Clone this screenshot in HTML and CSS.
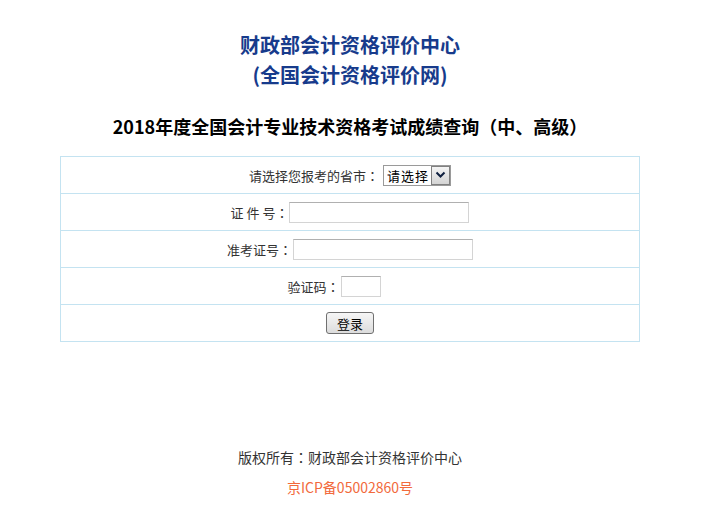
FILE: index.html
```html
<!DOCTYPE html>
<html lang="zh-CN">
<head>
  <meta charset="UTF-8" />
  <title>2018年度全国会计专业技术资格考试成绩查询</title>
  <link rel="stylesheet" href="styles.css">
</head>
<body>

  <div class="page">
    <div class="title">
      <div>财政部会计资格评价中心</div>
      <div>(全国会计资格评价网)</div>
    </div>

    <h2 class="subtitle">2018年度全国会计专业技术资格考试成绩查询（中、高级）</h2>

    <table class="query">
      <tr>
        <td>
          <span class="label">请选择您报考的省市<span class="colon" lang="zh-Hant">：</span></span>
          <span class="select">
            <span class="select-text">请选择</span>
            <span class="select-btn">
              <svg width="11" height="8" viewBox="0 0 11 8"><path d="M1.5 1.5 L5.5 5.5 L9.5 1.5" fill="none" stroke="#102040" stroke-width="2"/></svg>
            </span>
          </span>
        </td>
      </tr>
      <tr>
        <td><span class="label">证 件 号<span class="colon" lang="zh-Hant">：</span></span><input type="text" class="long"></td>
      </tr>
      <tr>
        <td><span class="label">准考证号<span class="colon" lang="zh-Hant">：</span></span><input type="text" class="long"></td>
      </tr>
      <tr>
        <td><span class="label">验证码<span class="colon" lang="zh-Hant">：</span></span><input type="text" class="short"><span class="code-img"></span></td>
      </tr>
      <tr>
        <td><button class="login">登录</button></td>
      </tr>
    </table>

    <div class="footer">
      <p>版权所有<span class="colon" lang="zh-Hant">：</span>财政部会计资格评价中心</p>
      <p class="icp">京ICP备05002860号</p>
    </div>
  </div>

</body>
</html>
```

FILE: styles.css
```css
body {
  margin: 0;
  font-family: "Noto Sans CJK SC", "Liberation Sans", sans-serif;
  font-size: 13px;
  color: #333;
  background: #fff;
}

.page {
  width: 700px;
}

.colon {
  font-family: "Noto Sans CJK TC", "Noto Sans CJK JP", sans-serif;
}

.title {
  margin-top: 30px;
  text-align: center;
  font-size: 20px;
  font-weight: bold;
  line-height: 30px;
  color: #173b8c;
}

.subtitle {
  margin: 21px 0 15px;
  text-align: center;
  font-size: 18px;
  line-height: 30px;
  color: #000;
}

.query {
  width: 580px;
  margin: 0 auto;
  border-collapse: collapse;
}
.query td {
  height: 36px;
  padding: 0;
  border: 1px solid #c4e3f1;
  text-align: center;
  vertical-align: middle;
}
.query .label {
  vertical-align: middle;
}

input {
  height: 21px;
  box-sizing: border-box;
  border: 1px solid #d4d4d4;
  border-top-color: #b0b0b0;
  vertical-align: middle;
  margin: 0 0 0 1px;
  padding: 0 2px;
}
input.long {
  width: 180px;
}
input.short {
  width: 40px;
}
.code-img {
  display: inline-block;
  width: 32px;
}

.select {
  display: inline-flex;
  width: 68px;
  height: 21px;
  box-sizing: border-box;
  border: 1px solid #9a9a9a;
  background: #fff;
  vertical-align: middle;
  margin-left: 1px;
}
.select-text {
  flex: 1;
  padding-left: 3px;
  line-height: 19px;
  text-align: left;
  color: #000;
  font-size: 13px;
  letter-spacing: 1px;
}
.select-btn {
  width: 19px;
  box-sizing: border-box;
  border: 1px solid #808080;
  background: linear-gradient(#f4f4f4, #d4d4d4);
  display: flex;
  align-items: center;
  justify-content: center;
}

.login {
  width: 48px;
  height: 22px;
  padding: 0;
  font-family: inherit;
  font-size: 13px;
  color: #000;
  border: 1px solid #707070;
  border-radius: 3px;
  background: linear-gradient(#f6f6f6, #dcdcdc);
  vertical-align: middle;
}

.footer {
  margin-top: 100px;
  text-align: center;
  font-size: 14px;
  line-height: 30px;
}
.footer p {
  margin: 0;
}
.footer .icp {
  color: #f26a3c;
}
```
